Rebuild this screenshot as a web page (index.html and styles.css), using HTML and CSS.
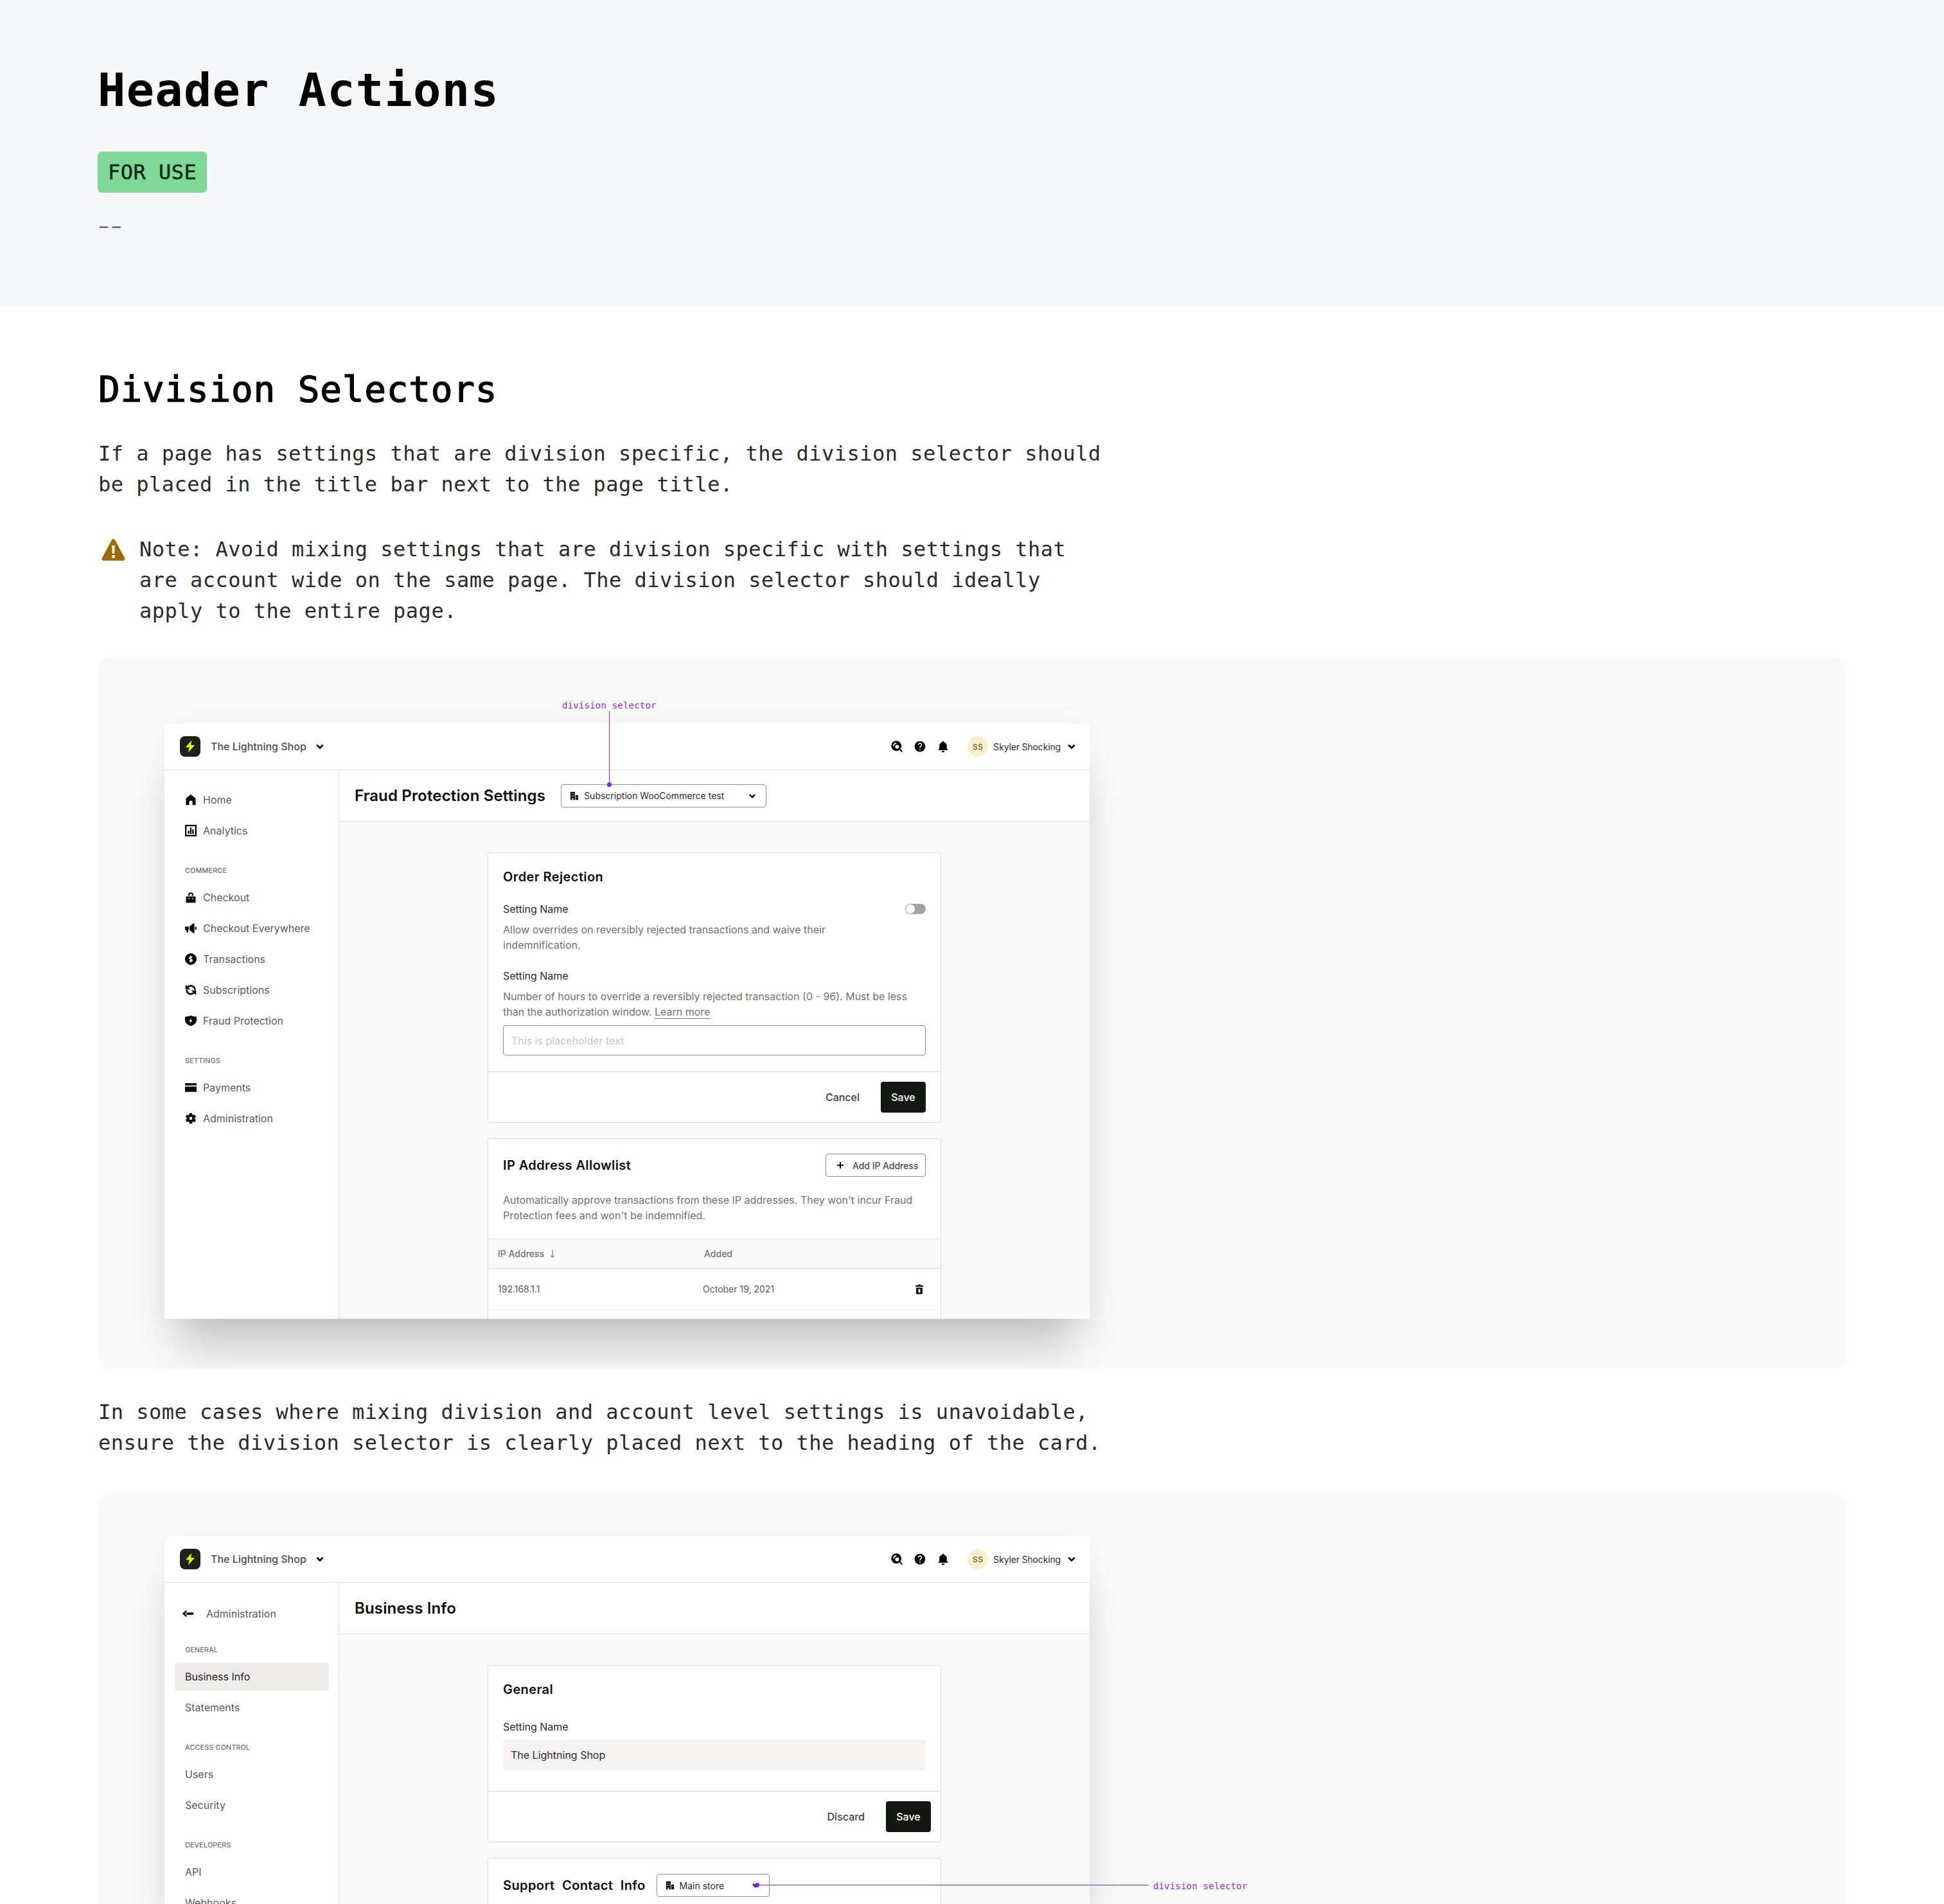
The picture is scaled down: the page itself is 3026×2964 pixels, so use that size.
FILE: index.html
```html
<!DOCTYPE html>
<html lang="en">
<head>
    <meta charset="UTF-8">
    <meta name="viewport" content="width=device-width, initial-scale=1.0">
    <title>Header Actions</title>
    <link rel="stylesheet" href="styles.css">
</head>
<body>
    <svg class="sprite" aria-hidden="true">
        <symbol id="i-chevron" viewBox="0 0 24 24"><path d="M5 8.500l7 7 7-7" fill="none" stroke="#000" stroke-width="4"/></symbol>
        <symbol id="i-bolt" viewBox="0 0 24 24"><path d="M14.500 1L3.500 13.500H10.500L8.500 23 20.500 9.500H13.500z" fill="#d9ff00"/></symbol>
        <symbol id="i-search" viewBox="0 0 24 24"><circle cx="11" cy="11" r="9.500"/><path d="M6 11a5 5 0 0 1 5-5" fill="none" stroke="#fff" stroke-width="2.400"/><circle cx="12.500" cy="12.500" r="3.600" fill="#fff"/><path d="M16 16l6 6" stroke="#000" stroke-width="2.400"/></symbol>
        <symbol id="i-help" viewBox="0 0 24 24"><path d="M12 2C6.480 2 2 6.480 2 12s4.480 10 10 10 10-4.480 10-10S17.520 2 12 2zm1 17h-2v-2h2v2zm2.070-7.750l-.9.920C13.450 12.900 13 13.500 13 15h-2v-.5c0-1.100.45-2.100 1.170-2.830l1.240-1.260c.37-.36.59-.86.59-1.410 0-1.100-.9-2-2-2s-2 .9-2 2H8c0-2.210 1.790-4 4-4s4 1.790 4 4c0 .88-.36 1.680-.93 2.250z"/></symbol>
        <symbol id="i-bell" viewBox="0 0 24 24"><path d="M9 20.500h6a3 2.500 0 0 1-6 0zM19 16v-5c0-3.400-1.900-6-5-6.700V4a2 2 0 0 0-4 0v.3C6.900 5 5 7.600 5 11v5l-2 2v1h18v-1z"/></symbol>
        <symbol id="i-home" viewBox="0 0 24 24"><path d="M12 1l10 8v14h-6.500v-6a3.500 3.500 0 0 0-7 0v6H2V9z"/></symbol>
        <symbol id="i-chart" viewBox="0 0 24 24"><path d="M0 0h24v24H0zM3 3v18h18V3z" fill-rule="evenodd"/><path d="M6 12h3v7H6zM10.500 6h3v13h-3zM15 9.500h3V19h-3z"/></symbol>
        <symbol id="i-bag" viewBox="0 0 24 24"><path d="M6.500 8.500V7a5.500 5.500 0 0 1 11 0v1.500h-2.700V7a2.800 2.800 0 0 0-5.600 0v1.500z"/><path d="M2 10h20v13H2z"/><circle cx="8" cy="14.500" r="1.300" fill="#fff"/><circle cx="16" cy="14.500" r="1.300" fill="#fff"/></symbol>
        <symbol id="i-horn" viewBox="0 0 24 24"><path d="M0 8.500h7.500v7H6.500V21H3.500l-.8-5.500H0zM9 8.500L17 2h2.500v20H17l-8-6.500zM21 8.500a3.500 3.500 0 0 1 0 7z"/></symbol>
        <symbol id="i-dollar" viewBox="0 0 24 24"><circle cx="12" cy="12" r="12"/><path d="M15 9.300c-.5-1.100-1.600-1.800-3-1.800-1.700 0-2.900 1-2.900 2.300 0 3.200 6 1.500 6 4.600 0 1.300-1.300 2.200-3.100 2.200-1.400 0-2.500-.7-3-1.800M12 5v14" fill="none" stroke="#fff" stroke-width="2"/></symbol>
        <symbol id="i-sync" viewBox="0 0 24 24"><path d="M5.500 6.500A8.500 8.500 0 0 1 20.500 12M18.500 17.500A8.500 8.500 0 0 1 3.500 12" fill="none" stroke="#000" stroke-width="3.600"/><path d="M1 1v10h10zM23 23V13H13z"/></symbol>
        <symbol id="i-shield" viewBox="0 0 24 24"><path d="M12 1c3 1.600 7 2.500 12 2.500V11c0 5.500-5.500 9.700-12 12C5.500 20.700 0 16.500 0 11V3.500C5 3.500 9 2.600 12 1z"/><path d="M13 6.500L8 13h3l-1 4.500 5.500-7H12.500z" fill="#fff"/></symbol>
        <symbol id="i-card" viewBox="0 0 24 24"><path d="M0 3h24v4.500H0zM0 10h24v11H0z"/></symbol>
        <symbol id="i-gear" viewBox="1.500 1.500 21 21"><path d="M19.140 12.940c.04-.3.06-.61.06-.94 0-.32-.02-.64-.07-.94l2.030-1.580c.18-.14.23-.41.12-.61l-1.920-3.320c-.12-.22-.37-.29-.59-.22l-2.390.96c-.5-.38-1.030-.7-1.620-.94l-.36-2.540c-.04-.24-.24-.41-.48-.41h-3.840c-.24 0-.43.17-.47.41l-.36 2.540c-.59.24-1.130.57-1.620.94l-2.390-.96c-.22-.08-.47 0-.59.22L2.740 8.870c-.12.21-.08.47.12.61l2.030 1.580c-.05.3-.09.63-.09.94s.02.64.07.94l-2.030 1.580c-.18.14-.23.41-.12.61l1.920 3.320c.12.22.37.29.59.22l2.390-.96c.5.38 1.030.7 1.620.94l.36 2.540c.05.24.24.41.48.41h3.840c.24 0 .44-.17.47-.41l.36-2.540c.59-.24 1.130-.56 1.620-.94l2.390.96c.22.08.47 0 .59-.22l1.920-3.320c.12-.22.07-.47-.12-.61l-2.010-1.580zM12 14.800a2.800 2.800 0 1 1 0-5.600 2.800 2.800 0 0 1 0 5.600z"/></symbol>
        <symbol id="i-building" viewBox="2 1 21 22"><path d="M3 2h11v20H3zM15.500 10H22v12h-6.500z"/><path d="M6 6h2v2H6zM10 6h2v2h-2zM6 11h2v2H6zM10 11h2v2h-2zM7 17h3v5H7zM17.500 13.500h2v2h-2z" fill="#fff"/></symbol>
        <symbol id="i-plus" viewBox="0 0 24 24"><path d="M12 2v20M2 12h20" stroke="#000" stroke-width="4" fill="none"/></symbol>
        <symbol id="i-trash" viewBox="0 0 24 24"><path d="M9.500 2h5v2H20v2.500H4V4h5.500zM5.500 8.500h13V22h-13z"/><path d="M10 11.500h4v7.500h-4z" fill="#fff"/></symbol>
        <symbol id="i-down" viewBox="0 0 24 24"><path d="M12 2v19M7.500 16.500L12 21l4.500-4.500" fill="none" stroke="#71716b" stroke-width="1.800"/></symbol>
        <symbol id="i-back" viewBox="0 0 24 24"><path d="M10 5l-8 7 8 7zM8 10h15v4H8z"/></symbol>
    </svg>

    <header class="hero">
        <h1>Header Actions</h1>
        <span class="badge">FOR USE</span>
        <p class="dash">--</p>
    </header>

    <main class="doc">
        <h2>Division Selectors</h2>
        <p class="copy">If a page has settings that are division specific, the division selector should<br>be placed in the title bar next to the page title.</p>

        <div class="note">
            <svg class="note-icon" viewBox="0 0 24 24"><path d="M12 1.500c.8 0 1.400.4 1.800 1.100l9.600 17.800c.7 1.300-.2 2.800-1.700 2.800H2.300C.8 23.200-.1 21.700.6 20.400l9.600-17.800c.4-.7 1-1.100 1.800-1.100z" fill="#9c6a00"/><path d="M10.500 8h3l-.4 8h-2.200zM10.500 17.500h3v3h-3z" fill="#fff"/></svg>
            <p class="copy">Note: Avoid mixing settings that are division specific with settings that<br>are account wide on the same page. The division selector should ideally<br>apply to the entire page.</p>
        </div>

        <section class="panel panel-first">
            <div class="shot">
                <span class="tag tag-top">division selector</span>
                <span class="line line-v"></span>
                <span class="dot dot-top"></span>

                <div class="app">
                    <div class="topbar">
                        <span class="logo"><svg class="ico-20"><use href="#i-bolt"/></svg></span>
                        <span class="shop">The Lightning Shop</span>
                        <svg class="ico-16"><use href="#i-chevron"/></svg>
                        <div class="tools">
                            <svg class="ico-20"><use href="#i-search"/></svg>
                            <svg class="ico-20"><use href="#i-help"/></svg>
                            <svg class="ico-20"><use href="#i-bell"/></svg>
                            <span class="avatar">SS</span>
                            <span class="user">Skyler Shocking</span>
                            <svg class="ico-16"><use href="#i-chevron"/></svg>
                        </div>
                    </div>
                    <div class="frame">
                        <nav class="side">
                            <a class="item"><svg class="ico-18"><use href="#i-home"/></svg>Home</a>
                            <a class="item"><svg class="ico-18"><use href="#i-chart"/></svg>Analytics</a>
                            <div class="label">COMMERCE</div>
                            <a class="item"><svg class="ico-18"><use href="#i-bag"/></svg>Checkout</a>
                            <a class="item"><svg class="ico-18"><use href="#i-horn"/></svg>Checkout Everywhere</a>
                            <a class="item"><svg class="ico-18"><use href="#i-dollar"/></svg>Transactions</a>
                            <a class="item"><svg class="ico-18"><use href="#i-sync"/></svg>Subscriptions</a>
                            <a class="item"><svg class="ico-18"><use href="#i-shield"/></svg>Fraud Protection</a>
                            <div class="label">SETTINGS</div>
                            <a class="item"><svg class="ico-18"><use href="#i-card"/></svg>Payments</a>
                            <a class="item"><svg class="ico-18"><use href="#i-gear"/></svg>Administration</a>
                        </nav>
                        <div class="page">
                            <div class="titlebar">
                                <h3>Fraud Protection Settings</h3>
                                <div class="select select-wide">
                                    <svg class="ico-14"><use href="#i-building"/></svg>
                                    <span>Subscription WooCommerce test</span>
                                    <svg class="ico-14 select-arrow"><use href="#i-chevron"/></svg>
                                </div>
                            </div>
                            <div class="content">
                                <section class="card">
                                    <div class="card-body">
                                        <h4>Order Rejection</h4>
                                        <div class="setting-row">
                                            <span class="setting">Setting Name</span>
                                            <span class="toggle"></span>
                                        </div>
                                        <p class="hint">Allow overrides on reversibly rejected transactions and waive their<br>indemnification.</p>
                                        <div class="setting setting-next">Setting Name</div>
                                        <p class="hint">Number of hours to override a reversibly rejected transaction (0 - 96). Must be less<br>than the authorization window. <a class="more">Learn more</a></p>
                                        <div class="input">This is placeholder text</div>
                                    </div>
                                    <div class="card-foot">
                                        <span class="ghost">Cancel</span>
                                        <span class="save">Save</span>
                                    </div>
                                </section>
                                <section class="card">
                                    <div class="card-body card-body-table">
                                        <div class="card-head">
                                            <h4>IP Address Allowlist</h4>
                                            <span class="add"><svg class="ico-12"><use href="#i-plus"/></svg>Add IP Address</span>
                                        </div>
                                        <p class="hint">Automatically approve transactions from these IP addresses. They won't incur Fraud<br>Protection fees and won't be indemnified.</p>
                                    </div>
                                    <div class="thead">
                                        <span>IP Address <svg class="ico-14"><use href="#i-down"/></svg></span>
                                        <span class="col-added">Added</span>
                                    </div>
                                    <div class="trow">
                                        <span>192.168.1.1</span>
                                        <span>October 19, 2021</span>
                                        <svg class="ico-18 trash"><use href="#i-trash"/></svg>
                                    </div>
                                    <div class="trow"></div>
                                </section>
                            </div>
                        </div>
                    </div>
                </div>
            </div>
        </section>

        <p class="copy copy-mid">In some cases where mixing division and account level settings is unavoidable,<br>ensure the division selector is clearly placed next to the heading of the card.</p>

        <section class="panel panel-second">
            <div class="shot">
                <span class="line line-h"></span>
                <span class="dot dot-side"></span>
                <span class="tag tag-side">division selector</span>

                <div class="app app-tall">
                    <div class="topbar">
                        <span class="logo"><svg class="ico-20"><use href="#i-bolt"/></svg></span>
                        <span class="shop">The Lightning Shop</span>
                        <svg class="ico-16"><use href="#i-chevron"/></svg>
                        <div class="tools">
                            <svg class="ico-20"><use href="#i-search"/></svg>
                            <svg class="ico-20"><use href="#i-help"/></svg>
                            <svg class="ico-20"><use href="#i-bell"/></svg>
                            <span class="avatar">SS</span>
                            <span class="user">Skyler Shocking</span>
                            <svg class="ico-16"><use href="#i-chevron"/></svg>
                        </div>
                    </div>
                    <div class="frame">
                        <nav class="side">
                            <a class="item item-back"><svg class="ico-20"><use href="#i-back"/></svg>Administration</a>
                            <div class="label label-first">GENERAL</div>
                            <a class="item item-on">Business Info</a>
                            <a class="item">Statements</a>
                            <div class="label">ACCESS CONTROL</div>
                            <a class="item">Users</a>
                            <a class="item">Security</a>
                            <div class="label">DEVELOPERS</div>
                            <a class="item">API</a>
                            <a class="item">Webhooks</a>
                        </nav>
                        <div class="page">
                            <div class="titlebar">
                                <h3>Business Info</h3>
                            </div>
                            <div class="content">
                                <section class="card">
                                    <div class="card-body">
                                        <h4>General</h4>
                                        <div class="setting setting-first">Setting Name</div>
                                        <div class="input input-filled">The Lightning Shop</div>
                                    </div>
                                    <div class="card-foot card-foot-wide">
                                        <span class="ghost">Discard</span>
                                        <span class="save">Save</span>
                                    </div>
                                </section>
                                <section class="card">
                                    <div class="card-body">
                                        <div class="card-head card-head-left">
                                            <h4 class="spaced">Support Contact Info</h4>
                                            <div class="select select-small">
                                                <svg class="ico-14"><use href="#i-building"/></svg>
                                                <span>Main store</span>
                                                <svg class="ico-14 select-arrow"><use href="#i-chevron"/></svg>
                                            </div>
                                        </div>
                                    </div>
                                </section>
                            </div>
                        </div>
                    </div>
                </div>
            </div>
        </section>
    </main>
</body>
</html>
```

FILE: styles.css
```css
:root {
    --mono: "DejaVu Sans Mono", "Liberation Mono", monospace;
    --sans: Inter, "Noto Sans", sans-serif;
    --line: #dcdcd8;
    --muted: #71716b;
    --ink: #12170f;
    --purple: #8a1fe0;
}

* {
    box-sizing: border-box;
    margin: 0;
    padding: 0;
}

html, body {
    height: 2964px;
    overflow: hidden;
}

body {
    background: #fff;
    color: #2a2a2a;
    font-family: var(--mono);
}

.sprite {
    display: none;
}

.hero {
    height: 476px;
    padding: 96px 152px 0;
    background: #f5f6f8;
}

.hero h1 {
    font-size: 72px;
    line-height: 88px;
    letter-spacing: 1.3px;
    color: #000;
}

.badge {
    display: inline-block;
    height: 64px;
    margin-top: 52px;
    padding: 0 16px;
    background: #7fd896;
    border-radius: 6px;
    font-size: 32px;
    line-height: 64px;
    letter-spacing: .5px;
    color: #0b2a14;
    -webkit-text-stroke: .5px #0b2a14;
}

.dash {
    width: max-content;
    margin: 28px 0 0 -6px;
    font-size: 32px;
    line-height: 48px;
    letter-spacing: -7px;
    color: #666;
    transform: scaleX(1.6);
    transform-origin: left;
}

.doc {
    padding: 94px 152px 0 153px;
}

.doc h2 {
    font-size: 56px;
    font-weight: 400;
    line-height: 72px;
    letter-spacing: .8px;
    color: #000;
    -webkit-text-stroke: 1.3px #000;
}

.copy {
    margin-top: 40px;
    font-size: 32px;
    line-height: 48px;
    letter-spacing: .49px;
    white-space: nowrap;
}

.note {
    display: flex;
    gap: 22px;
    margin-top: 53px;
    padding-left: 5px;
}

.note .copy {
    margin-top: 0;
}

.note-icon {
    flex: none;
    width: 37px;
    height: 37px;
    margin-top: 6px;
}

.copy-mid {
    margin-top: 43px;
}

.panel {
    overflow: hidden;
    background: #fafafa;
    border-radius: 20px;
}

.panel-first {
    margin-top: 48px;
    padding: 103px 103px 78px;
}

.panel-second {
    height: 640px;
    margin-top: 54px;
    padding: 67px 103px 0;
    border-radius: 20px 20px 0 0;
}

/* screenshot of the product inside a panel */
.shot {
    position: relative;
    width: 1440px;
    font-family: var(--sans);
}

.app {
    display: flex;
    flex-direction: column;
    height: 927px;
    overflow: hidden;
    background: #fff;
    border-radius: 6px 6px 0 0;
    box-shadow: 0 0 40px rgba(0,0,0,0.04), 0 62px 70px -20px rgba(0,0,0,0.22);
}

.app-tall {
    height: 573px;
}

.tag {
    position: absolute;
    z-index: 2;
    font-family: var(--mono);
    font-size: 14px;
    line-height: 18px;
    letter-spacing: .2px;
    color: #a020f0;
    white-space: nowrap;
}

.tag-top {
    top: -37px;
    left: 619px;
}

.tag-side {
    top: 536px;
    left: 1539px;
}

.line {
    position: absolute;
    z-index: 2;
    background: var(--purple);
}

.line-v {
    top: -19px;
    left: 692px;
    width: 1px;
    height: 114px;
}

.line-h {
    top: 543px;
    left: 922px;
    width: 610px;
    height: 1px;
}

.dot {
    position: absolute;
    z-index: 2;
    width: 7px;
    height: 7px;
    background: var(--purple);
    border-radius: 50%;
}

.dot-top {
    top: 92px;
    left: 689px;
}

.dot-side {
    top: 540px;
    left: 919px;
}

.topbar {
    display: flex;
    flex: none;
    align-items: center;
    height: 73px;
    padding: 0 20px 0 24px;
    border-bottom: 1px solid var(--line);
}

.logo {
    display: flex;
    align-items: center;
    justify-content: center;
    width: 32px;
    height: 32px;
    background: #1e2118;
    border-radius: 8px;
}

.shop {
    margin: 0 13px 0 16px;
    font-size: 16px;
    font-weight: 500;
    color: #4a4a46;
}

.tools {
    display: flex;
    align-items: center;
    gap: 16px;
    margin-left: auto;
}

.avatar {
    display: flex;
    align-items: center;
    justify-content: center;
    width: 32px;
    height: 32px;
    margin-left: 12px;
    background: #fcefcf;
    border-radius: 50%;
    font-size: 12px;
    font-weight: 500;
    letter-spacing: .5px;
    color: #7a5a10;
}

.user {
    margin: 0 -7px 0 -8px;
    font-size: 14px;
    letter-spacing: -.15px;
    color: #2c2c28;
}

.ico-12 { width: 12px; height: 12px; flex: none; }
.ico-14 { width: 14px; height: 14px; flex: none; }
.ico-16 { width: 16px; height: 16px; flex: none; }
.ico-18 { width: 18px; height: 18px; flex: none; }
.ico-20 { width: 20px; height: 20px; flex: none; }

.frame {
    display: flex;
    flex: 1;
    min-height: 0;
}

.side {
    flex: none;
    width: 272px;
    padding: 24px 15px 0 16px;
    border-right: 1px solid var(--line);
}

.item {
    display: flex;
    align-items: center;
    gap: 10px;
    height: 44px;
    margin-bottom: 4px;
    padding-left: 16px;
    border-radius: 4px;
    font-size: 16px;
    color: #5a5a55;
}

.item-back {
    gap: 19px;
    margin-top: 2px;
    padding-left: 10px;
}

.item-on {
    background: #eeedeb;
    color: #1c1c18;
}

.label {
    height: 16px;
    margin: 32px 0 12px 16px;
    font-size: 11px;
    font-weight: 500;
    line-height: 16px;
    color: var(--muted);
}

.label-first {
    margin-top: 26px;
}

.page {
    flex: 1;
    min-width: 0;
    background: #fafafa;
}

.titlebar {
    display: flex;
    align-items: center;
    gap: 24px;
    height: 80px;
    padding: 0 24px;
    background: #fff;
    border-bottom: 1px solid var(--line);
}

.titlebar h3 {
    font-size: 24px;
    font-weight: 600;
    letter-spacing: .16px;
    color: #0c0c0a;
}

.select {
    display: flex;
    align-items: center;
    gap: 8px;
    height: 36px;
    padding: 0 14px 0 13px;
    background: #fff;
    border: 1px solid #8e8e88;
    border-radius: 4px;
    font-size: 14px;
    color: #2c2c28;
}

.select-wide {
    width: 320px;
}

.select-small {
    width: 176px;
}

.select-arrow {
    margin-left: auto;
}

.content {
    padding-top: 48px;
}

.card {
    width: 706px;
    margin: 0 auto 24px;
    background: #fff;
    border: 1px solid var(--line);
    border-radius: 4px;
}

.card-body {
    padding: 24px 23px;
}

.card-body-table {
    padding-top: 23px;
}

.card h4 {
    font-size: 20px;
    font-weight: 600;
    line-height: 26px;
    letter-spacing: .4px;
    color: #0c0c0a;
}

.card h4.spaced {
    word-spacing: 6px;
}

.setting-row {
    display: flex;
    align-items: center;
    justify-content: space-between;
    margin-top: 27px;
}

.setting {
    font-size: 16px;
    line-height: 20px;
    color: #2c2c28;
}

.setting-next {
    margin-top: 26px;
}

.setting-first {
    margin: 35px 0 10px;
}

.toggle {
    position: relative;
    width: 32px;
    height: 16px;
    background: #a3a39c;
    border-radius: 8px;
}

.toggle::after {
    content: "";
    position: absolute;
    top: 1px;
    left: 1px;
    width: 14px;
    height: 14px;
    background: #fff;
    border-radius: 50%;
}

.hint {
    margin-top: 10px;
    font-size: 16px;
    line-height: 24px;
    color: var(--muted);
}

.more {
    border-bottom: 1px solid var(--muted);
}

.input {
    display: flex;
    align-items: center;
    height: 47px;
    margin: 9px 0 1px;
    padding-left: 12px;
    border: 1px solid #8e8e88;
    border-radius: 4px;
    font-size: 16px;
    color: #c8c8c4;
}

.input-filled {
    height: 48px;
    margin: 0;
    background: #f5f4f2;
    border: none;
    color: #2c2c28;
}

.card-body:has(.setting-first) {
    padding-bottom: 32px;
}

.card-foot {
    display: flex;
    align-items: center;
    justify-content: flex-end;
    gap: 33px;
    padding: 15px 23px 15px;
    border-top: 1px solid var(--line);
}

.card-foot-wide {
    padding-right: 15px;
}

.ghost {
    font-size: 16px;
    font-weight: 500;
    color: #3c3c38;
}

.save {
    width: 70px;
    height: 48px;
    background: var(--ink);
    border-radius: 4px;
    font-size: 16px;
    font-weight: 500;
    line-height: 48px;
    text-align: center;
    color: #fff;
}

.card-head {
    display: flex;
    align-items: center;
    justify-content: space-between;
    height: 36px;
}

.card-head-left {
    justify-content: flex-start;
    gap: 17px;
}

.card-head + .hint {
    margin-top: 24px;
}

.add {
    display: flex;
    align-items: center;
    gap: 13px;
    width: 156px;
    height: 36px;
    padding-left: 16px;
    border: 1px solid #8e8e88;
    border-radius: 4px;
    font-size: 14px;
    font-weight: 500;
    letter-spacing: -.05px;
    color: #4a4a46;
}

.thead {
    display: flex;
    align-items: center;
    height: 47px;
    padding-left: 15px;
    background: #fafafa;
    border-top: 1px solid var(--line);
    border-bottom: 1px solid var(--line);
    font-size: 14px;
    font-weight: 500;
    color: var(--muted);
}

.thead span:first-child {
    display: flex;
    align-items: center;
    gap: 6px;
    width: 321px;
}

.trow {
    display: flex;
    align-items: center;
    height: 64px;
    padding: 0 24px 0 15px;
    border-bottom: 1px solid #eeeeea;
    font-size: 14px;
    color: #5a5a55;
}

.trow span:first-child {
    width: 319px;
}

.trash {
    margin-left: auto;
}
```
